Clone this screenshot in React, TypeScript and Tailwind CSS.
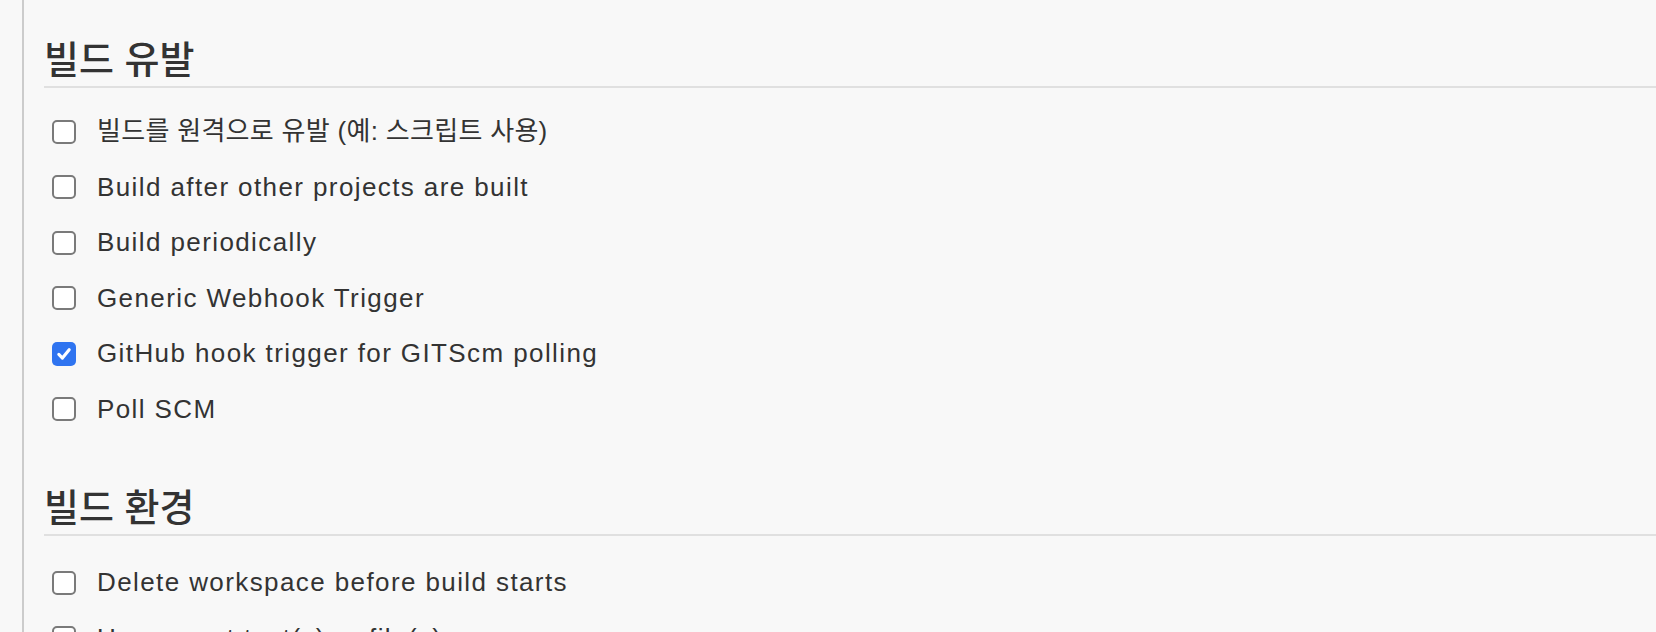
const TRIGGERS = [
  { label: "빌드를 원격으로 유발 (예: 스크립트 사용)", checked: false, korean: true },
  { label: "Build after other projects are built", checked: false },
  { label: "Build periodically", checked: false },
  { label: "Generic Webhook Trigger", checked: false },
  { label: "GitHub hook trigger for GITScm polling", checked: true },
  { label: "Poll SCM", checked: false },
];

const ENVIRONMENT = [
  { label: "Delete workspace before build starts", checked: false },
  { label: "Use secret text(s) or file(s)", checked: false },
];

function Checkbox({ checked }: { checked: boolean }) {
  if (checked) {
    return (
      <span className="flex h-[24px] w-[24px] flex-shrink-0 items-center justify-center rounded-[5px] bg-[#2f74f0]">
        <svg width="18" height="18" viewBox="0 0 16 16" fill="none">
          <path
            d="M3.4 8.4 L6.6 11.6 L12.6 4.2"
            stroke="white"
            strokeWidth="2.8"
            strokeLinecap="round"
            strokeLinejoin="round"
          />
        </svg>
      </span>
    );
  }
  return <span className="h-[24px] w-[24px] flex-shrink-0 rounded-[5px] border-2 border-[#7a7a7a] bg-white" />;
}

function Row({ label, checked, korean }: { label: string; checked: boolean; korean?: boolean }) {
  return (
    <div className="flex h-[55.5px] items-center pl-[8px]">
      <Checkbox checked={checked} />
      <span
        className={`ml-[21px] whitespace-nowrap text-[26px] text-[#333] ${
          korean ? "tracking-[0.3px]" : "tracking-[1.4px]"
        }`}
      >
        {label}
      </span>
    </div>
  );
}

function Section({
  title,
  items,
  rowsGap,
  className = "",
}: {
  title: string;
  items: { label: string; checked: boolean; korean?: boolean }[];
  rowsGap: string;
  className?: string;
}) {
  return (
    <section className={className}>
      <h2 className="border-b-2 border-[#e0e0e0] pb-[4px] text-[38px] font-medium leading-[44px] text-[#333]">
        {title}
      </h2>
      <div className={rowsGap}>
        {items.map((item) => (
          <Row key={item.label} {...item} />
        ))}
      </div>
    </section>
  );
}

export default function App() {
  return (
    <div
      className="h-[632px] overflow-hidden bg-[#f8f8f8] pl-[22px]"
      style={{ fontFamily: '"Liberation Sans", "Noto Sans CJK KR", Arial, sans-serif' }}
    >
      <div className="h-full border-l-2 border-[#cccccc] pl-[20px] pt-[38px]">
        <Section title="빌드 유발" items={TRIGGERS} rowsGap="mt-[16px]" />
        <Section title="빌드 환경" items={ENVIRONMENT} rowsGap="mt-[19px]" className="mt-[49px]" />
      </div>
    </div>
  );
}
